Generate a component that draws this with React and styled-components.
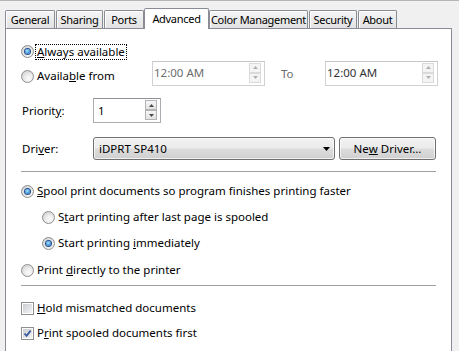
import styled, { createGlobalStyle } from "styled-components";

const GlobalStyle = createGlobalStyle`
  html, body {
    margin: 0;
    padding: 0;
    background: #f0f0f0;
    overflow: hidden;
  }
  body {
    font-family: "Noto Sans", "Open Sans", sans-serif;
    font-size: 11.5px;
    color: #000;
  }
`;

const Dialog = styled.div`
  width: 459px;
  height: 351px;
  box-sizing: border-box;
  overflow: hidden;
  background: #f0f0f0;
  border-top: 1px solid #b5b5b5;
  padding: 7px 0 0 5px;
`;

const TabStrip = styled.div`
  position: relative;
  z-index: 2;
  display: flex;
  align-items: flex-start;
  height: 21px;
  margin-bottom: -1px;
`;

const Tab = styled.div`
  box-sizing: border-box;
  flex: none;
  width: ${({ $w }) => $w}px;
  height: ${({ $active }) => ($active ? "21px" : "18px")};
  margin: ${({ $active }) => ($active ? "0 0 0 -1px" : "2px 1px 0 0")};
  padding-bottom: ${({ $active }) => ($active ? "2px" : "0")};
  border: 1px solid #898c95;
  border-bottom: none;
  border-radius: 2px 2px 0 0;
  background: ${({ $active }) =>
    $active ? "#fff" : "linear-gradient(#f5f5f5, #ebebeb 50%, #e2e2e2)"};
  box-shadow: ${({ $active }) => ($active ? "none" : "inset 1px 1px 0 #fff")};
  display: flex;
  align-items: center;
  justify-content: center;
  font-size: 11px;
  letter-spacing: -0.3px;
  line-height: 1;
  white-space: nowrap;
`;

const Panel = styled.div`
  width: 447px;
  height: 400px;
  box-sizing: border-box;
  border: 1px solid #898c95;
  background: #fff;
  padding: 14px 14px 0 15px;
  display: flex;
  flex-direction: column;
`;

const Row = styled.div`
  display: flex;
  align-items: center;
  height: ${({ $h }) => $h}px;
  margin-top: ${({ $top }) => $top || 0}px;
`;

const Choice = styled.div`
  display: flex;
  align-items: center;
  flex: none;
  height: 18px;
  width: ${({ $w }) => ($w ? `${$w}px` : "auto")};
  margin-top: ${({ $top }) => $top || 0}px;
  margin-left: ${({ $indent }) => $indent || 0}px;
`;

const RadioMark = styled.span`
  box-sizing: border-box;
  flex: none;
  width: 13px;
  height: 13px;
  border-radius: 50%;
  border: 1px solid #8e8f8f;
  background: radial-gradient(circle at 62% 68%, #fbfbfb 0, #ececec 40%, #c6c6c6 100%);
  display: flex;
  align-items: center;
  justify-content: center;
  &::after {
    content: "";
    display: ${({ $checked }) => ($checked ? "block" : "none")};
    width: 5px;
    height: 5px;
    border-radius: 50%;
    background: radial-gradient(circle at 45% 40%, #bfe9ff 0, #4ea3e6 45%, #1c4f93 100%);
    box-shadow: 0 0 0 1px #23508a;
  }
`;

const CheckMark = styled.span`
  box-sizing: border-box;
  flex: none;
  width: 13px;
  height: 13px;
  border: 1px solid #8e8f8f;
  background: #fff;
  padding: 1px;
  display: flex;
  & > span {
    flex: 1;
    display: flex;
    align-items: center;
    justify-content: center;
    background: linear-gradient(135deg, #c9ccd1, #f4f4f4);
  }
`;

const ChoiceText = styled.span`
  margin-left: 2px;
  padding: 0 1px;
  line-height: 14px;
  outline: ${({ $focus }) => ($focus ? "1px dotted #000" : "none")};
  white-space: nowrap;
`;

const Label = styled.span`
  flex: none;
  width: ${({ $w }) => $w}px;
  padding-left: ${({ $inset }) => $inset || 1}px;
  box-sizing: border-box;
  color: ${({ $dim }) => ($dim ? "#6d6d6d" : "#000")};
  white-space: nowrap;
`;

const SpinField = styled.div`
  box-sizing: border-box;
  flex: none;
  display: flex;
  align-items: center;
  justify-content: space-between;
  width: ${({ $w }) => $w}px;
  height: 25px;
  border: 1px solid ${({ $disabled }) => ($disabled ? "#cfd1d4" : "#abadb3")};
  border-top-color: ${({ $disabled }) => ($disabled ? "#c4c6c9" : "#8e9197")};
  background: #fff;
  padding: 0 3px 1px ${({ $inset }) => $inset}px;
  color: ${({ $tone }) => $tone};
`;

const Spinner = styled.div`
  display: flex;
  flex-direction: column;
  align-self: flex-start;
  margin-top: 1px;
`;

const SpinButton = styled.span`
  box-sizing: border-box;
  width: 12px;
  height: 10px;
  border: 1px solid ${({ $disabled }) => ($disabled ? "#dadada" : "#b4b4b4")};
  background: ${({ $disabled }) =>
    $disabled ? "#f4f4f4" : "linear-gradient(#f6f6f6, #e3e3e3)"};
  display: flex;
  align-items: center;
  justify-content: center;
`;

const ComboBox = styled.div`
  box-sizing: border-box;
  flex: none;
  width: 242px;
  height: 23px;
  border: 1px solid #707070;
  border-radius: 3px;
  background: linear-gradient(#f2f2f2 0%, #ebebeb 48%, #dddddd 52%, #cfcfcf 100%);
  box-shadow: inset 0 0 0 1px rgba(255, 255, 255, 0.7);
  display: flex;
  align-items: center;
  justify-content: space-between;
  padding: 0 4px 0 5px;
`;

const Button = styled.div`
  box-sizing: border-box;
  flex: none;
  width: 97px;
  height: 23px;
  margin-left: 4px;
  border: 1px solid #707070;
  border-radius: 3px;
  background: linear-gradient(#f2f2f2 0%, #ebebeb 48%, #dddddd 52%, #cfcfcf 100%);
  box-shadow: inset 0 0 0 1px rgba(255, 255, 255, 0.7);
  display: flex;
  align-items: center;
  justify-content: center;
`;

const Separator = styled.div`
  flex: none;
  height: 1px;
  width: 415px;
  background: #a0a0a0;
  margin-top: ${({ $top }) => $top}px;
`;

const Arrow = ({ up, color }) => (
  <svg width="5" height="3" viewBox="0 0 5 3">
    <path d={up ? "M0 3 L2.5 0 L5 3 Z" : "M0 0 L2.5 3 L5 0 Z"} fill={color} />
  </svg>
);

const Radio = ({ checked, children, focus, indent, top, w }) => (
  <Choice $indent={indent} $top={top} $w={w}>
    <RadioMark $checked={checked} />
    <ChoiceText $focus={focus}>{children}</ChoiceText>
  </Choice>
);

const Check = ({ checked, children, top }) => (
  <Choice $top={top}>
    <CheckMark>
      <span>
        {checked && (
          <svg width="9" height="9" viewBox="0 0 9 9">
            <path d="M1.5 4.5 L3.6 6.8 L7.6 1.6" fill="none" stroke="#3c5aa0" strokeWidth="1.8" />
          </svg>
        )}
      </span>
    </CheckMark>
    {children && <ChoiceText>{children}</ChoiceText>}
  </Choice>
);

const Spin = ({ value, width, inset, disabled, tone }) => {
  const arrow = disabled ? "#b0b0b0" : "#4a4a4a";
  return (
    <SpinField $w={width} $inset={inset} $disabled={disabled} $tone={tone}>
      <span>{value}</span>
      <Spinner>
        <SpinButton $disabled={disabled}>
          <Arrow up color={arrow} />
        </SpinButton>
        <SpinButton $disabled={disabled}>
          <Arrow color={arrow} />
        </SpinButton>
      </Spinner>
    </SpinField>
  );
};

const tabs = [
  { name: "General", width: 50 },
  { name: "Sharing", width: 47 },
  { name: "Ports", width: 40 },
  { name: "Advanced", width: 65, active: true },
  { name: "Color Management", width: 99 },
  { name: "Security", width: 48 },
  { name: "About", width: 39 },
];

export default function App() {
  return (
    <>
      <GlobalStyle />
      <Dialog>
        <TabStrip>
          {tabs.map((t) => (
            <Tab key={t.name} $w={t.width} $active={t.active}>
              {t.name}
            </Tab>
          ))}
        </TabStrip>
        <Panel>
          <Row $h={17}>
            <Radio checked focus>
              <u>A</u>lways available
            </Radio>
          </Row>
          <Row $h={26}>
            <Radio top={6} w={131}>
              Availa<u>b</u>le from
            </Radio>
            <Spin value="12:00 AM" width={113} inset={1} disabled tone="#6d6d6d" />
            <Label $w={60} $inset={16} $dim>
              To
            </Label>
            <Spin value="12:00 AM" width={113} inset={1} disabled tone="#333" />
          </Row>
          <Row $h={25} $top={12}>
            <Label $w={72}>
              Priorit<u>y</u>:
            </Label>
            <Spin value="1" width={68} inset={4} tone="#000" />
          </Row>
          <Row $h={23} $top={14}>
            <Label $w={72}>
              Dri<u>v</u>er:
            </Label>
            <ComboBox>
              <span>iDPRT SP410</span>
              <svg width="7" height="4" viewBox="0 0 7 4">
                <path d="M0 0 L3.5 4 L7 0 Z" fill="#000" />
              </svg>
            </ComboBox>
            <Button>
              Ne<u>w</u>&nbsp;Driver...
            </Button>
          </Row>
          <Separator $top={11} />
          <Radio checked top={10}>
            <u>S</u>pool print documents so program finishes printing faster
          </Radio>
          <Radio indent={21} top={8}>
            S<u>t</u>art printing after last page is spooled
          </Radio>
          <Radio checked indent={21} top={8}>
            Start printing <u>i</u>mmediately
          </Radio>
          <Radio top={9}>
            Print <u>d</u>irectly to the printer
          </Radio>
          <Separator $top={6} />
          <Check top={13}>
            <u>H</u>old mismatched documents
          </Check>
          <Check checked top={7}>
            P<u>r</u>int spooled documents first
          </Check>
          <Check top={6} />
        </Panel>
      </Dialog>
    </>
  );
}
